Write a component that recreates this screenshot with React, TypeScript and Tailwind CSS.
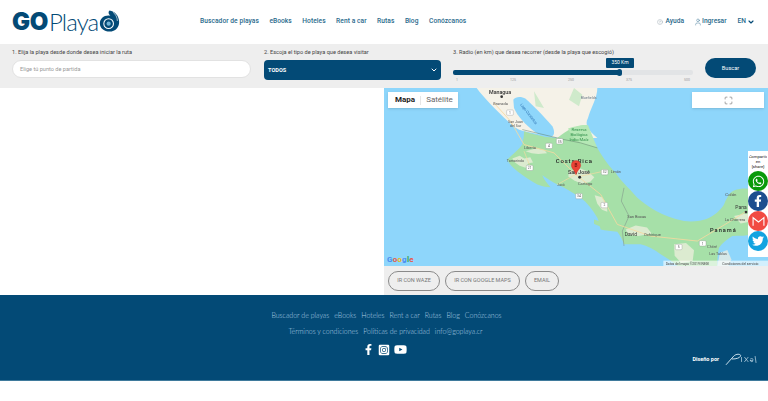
import { ChevronDown, CircleHelp, User, Maximize } from "lucide-react";
import { FaWhatsapp, FaFacebookF, FaTwitter, FaInstagramSquare, FaYoutube } from "react-icons/fa";

const nav = ["Buscador de playas", "eBooks", "Hoteles", "Rent a car", "Rutas", "Blog", "Conózcanos"];

function Logo() {
  return (
    <div className="flex items-center text-[#034a76] w-[200px] pl-3">
      <span className="text-[24px] leading-none font-black tracking-[-0.4px] font-['Inter',sans-serif]">GO</span>
      <span className="text-[24px] leading-none font-light tracking-[-0.9px] ml-[1px] font-['Lato',sans-serif]">Playa</span>
      <svg viewBox="0 0 24 26" className="w-[21px] h-[24px] -mt-[2px] ml-[1px]">
        <path d="M12 1c6 1 11 6 11 13 0 6-4 11-11 11C6 25 1 21 1 16 1 10 6 6 13 7 11 5 10 3 12 1z" fill="#034a76" />
        <circle cx="11" cy="16" r="5.5" fill="none" stroke="#fff" strokeWidth="1.2" />
        <circle cx="11" cy="16" r="2.4" fill="#6fb3d6" />
        <path d="M16 3c3 2 5 6 5 10" fill="none" stroke="#fff" strokeWidth="0.7" />
      </svg>
    </div>
  );
}

function Header() {
  return (
    <header className="h-[44px] bg-white flex items-center text-[#2a6a8c] text-[6.65px] font-medium font-['Roboto',sans-serif]">
      <Logo />
      <nav className="flex gap-[10.5px] tracking-[0.05px]">
        {nav.map((n) => (
          <span key={n}>{n}</span>
        ))}
      </nav>
      <div className="ml-auto flex items-center pr-[13px]">
        <CircleHelp size={6} strokeWidth={1.5} className="text-[#8a9aa3] mr-[2px]" />
        <span>Ayuda</span>
        <User size={8} strokeWidth={1.3} className="ml-[10px]" />
        <span>Ingresar</span>
        <span className="ml-[11px]">EN</span>
        <ChevronDown size={8} strokeWidth={3.5} className="text-[#034a76] ml-[1px]" />
      </div>
    </header>
  );
}

function Search() {
  return (
    <section className="h-[44px] bg-[#eeeeee] flex pl-3 pr-3 text-[5.6px] text-[#444] font-['Roboto',sans-serif]">
      <div className="w-[239px] mr-[13px] pt-[5px]">
        <p className="leading-[7px]">1. Elija la playa desde donde desea iniciar la ruta</p>
        <div className="mt-[4px] h-[18px] bg-white rounded-[9px] border border-[#e2e2e2] flex items-center pl-[7px] text-[#999]">
          Elige tú punto de partida
        </div>
      </div>
      <div className="w-[177px] mr-[12px] pt-[5px]">
        <p className="leading-[7px]">2. Escoja el tipo de playa que desea visitar</p>
        <div className="mt-[4px] h-[20px] bg-[#034a76] rounded-[4px] flex items-center justify-between pl-[4px] pr-[3px] text-white font-bold">
          TODOS
          <ChevronDown size={8} strokeWidth={3} />
        </div>
      </div>
      <div className="w-[240px] mr-[12px] pt-[5px]">
        <p className="leading-[7px]">3. Radio (en km) que desea recorrer (desde la playa que escogió)</p>
        <div className="relative mt-[14px] h-[5px] bg-[#e2e4e6] rounded-[2px]">
          <div className="h-full w-[167px] bg-[#034a76] rounded-[2px]" />
          <div className="absolute left-[164px] -top-[1px] w-[5px] h-[7px] rounded-full bg-[#034a76]" />
          <div className="absolute left-[153px] -top-[12px] w-[28px] h-[10px] rounded-[1px] bg-[#034a76] text-white flex items-center justify-center text-[5px]">
            350 Km
          </div>
        </div>
        <div className="flex justify-between mt-[3px] px-[3px] text-[3.5px] text-[#999] leading-[5px]">
          <span>1</span>
          <span>125</span>
          <span>250</span>
          <span>375</span>
          <span>500</span>
        </div>
      </div>
      <div className="pt-[14px]">
        <div className="w-[51px] h-[20px] rounded-full bg-[#034a76] text-white flex items-center justify-center">Buscar</div>
      </div>
    </section>
  );
}

function MapArt() {
  const road = "#f7d9a0";
  const sand = "#f3f0e2";
  return (
    <svg viewBox="0 0 1152 535" className="block w-[384px] h-[178px] blur-[0.3px]" preserveAspectRatio="none" fontFamily="Roboto, sans-serif">
      <rect width="1152" height="535" fill="#8ed6fb" />
      {/* Nicaragua */}
      <path d="M278 0 C300 30 340 70 372 100 C385 115 400 125 420 130 L520 150 L640 150 C615 130 600 110 612 90 C620 60 640 30 640 0Z" fill="#f5f2e8" />
      <path d="M570 0l25 20-10 35-30-20zM450 10l30 50-25-5z" fill="#cfeacb" />
      {/* Costa Rica and Panama */}
      <path
        d="M420 130 C450 140 490 150 520 150 C550 125 580 110 608 112 C620 140 630 165 640 180 C660 215 680 240 695 255 C710 280 730 295 760 330 C790 355 830 385 900 400 C940 405 970 395 985 385 C1000 375 1015 360 1020 350 C1030 325 1040 312 1050 308 C1075 300 1100 300 1115 310 C1130 325 1140 335 1152 340 L1152 420 C1130 430 1110 438 1100 440 C1080 446 1060 442 1045 445 C1030 455 1015 465 1005 480 C1000 500 1000 520 1000 535 L880 535 C865 520 845 510 830 500 C810 485 790 475 770 470 L720 470 C715 455 708 442 700 432 C680 430 665 428 650 425 C645 410 645 400 640 390 C625 365 610 345 590 330 C565 315 545 300 520 290 C505 282 490 272 475 262 C480 275 490 288 500 298 C485 298 472 295 460 290 C440 278 418 265 400 250 C385 238 375 228 370 215 C385 200 405 185 415 170 C418 155 420 145 420 130Z"
        fill="#a6e0a8"
      />
      <path d="M552 122 C575 115 600 110 612 112 L640 180 L590 165 C575 155 560 140 552 122Z" fill="#b5e8b5" />
      <g fill={sand} opacity="0.7">
        <path d="M385 212l22-8 14 8 18-4 8 16-14 2-8 14-18-6-14-10z" />
        <path d="M425 190l30-8 26 4 8 10-26 2-20-2z" />
        <path d="M555 250l34-8 24 10 18 16-12 14-26 6-22-10-18-12z" />
        <path d="M632 322l22 6 14 20 2 24-16-6-14-18z" />
        <path d="M725 425l30-12 34 6 14 18-40 8-30-4z" />
        <path d="M870 470l36-4 24 22-4 32-34 6-20-22z" />
        <path d="M1000 535l8-40 22-8 12 28-8 20z" />
        <path d="M1050 385l36-8 36 4-10 18-42 8z" />
      </g>
      <path d="M630 395 C650 400 668 415 680 425 C665 425 645 415 630 408Z" fill="#a6e0a8" />
      {/* Lake */}
      <path d="M388 35 C395 25 412 25 425 32 C445 50 480 85 505 115 C512 128 512 140 505 145 C490 150 470 145 450 130 C425 110 400 85 390 60Z" fill="#8ed6fb" />
      {/* Borders */}
      <path d="M415 125 L520 150 L540 155 L590 165 L640 180" fill="none" stroke="#5f7f6a" strokeWidth="1.5" />
      <path d="M720 300 L712 340 L735 385 L715 430 L720 475" fill="none" stroke="#7c8a85" strokeWidth="1.5" />
      {/* Roads */}
      <path d="M330 45 L380 100 L420 170 L510 195 L575 260 L650 320 L700 410 L800 445 L940 460 L1040 400 L1085 372" fill="none" stroke={road} strokeWidth="2.5" />
      <path d="M590 265 L660 250 M420 190 L440 240 M575 260 L520 290" fill="none" stroke={road} strokeWidth="2" />
      {/* Shields */}
      {[[378, 74, "1"], [527, 160, "35"], [495, 174, "4"], [437, 240, "21"], [662, 253, "32"], [585, 325, "34"], [661, 352, "2"], [956, 467, "1"], [884, 478, "5"]].map(([x, y, t]) => (
        <g key={String(t) + x}>
          <rect x={Number(x) - 10} y={Number(y) - 8} width="20" height="16" rx="3" fill="#fff" stroke="#888" strokeWidth="1" />
          <text x={Number(x)} y={Number(y) + 4} fontSize="10" textAnchor="middle" fill="#555">{t}</text>
        </g>
      ))}
      {/* Labels */}
      <g fill="#555" fontSize="13">
        <text x="315" y="18" fontSize="16" fill="#333" fontWeight="500">Managua</text>
        <circle cx="353" cy="26" r="4" fill="#333" />
        <text x="327" y="50" fontSize="12">Granada</text>
        <text x="590" y="32" fontSize="11" fill="#6a7a88">Bluefields</text>
        <text x="372" y="104" fontSize="11">San Juan</text>
        <text x="378" y="116" fontSize="11">del Sur</text>
        <text x="420" y="184" fontSize="12">Liberia</text>
        <text x="368" y="223" fontSize="11">Tamarindo</text>
        <text x="680" y="256" fontSize="11">Limón</text>
        <text x="520" y="296" fontSize="10">Jacó</text>
        <text x="582" y="292" fontSize="12">Cartago</text>
        <text x="730" y="392" fontSize="12">San Bocas</text>
        <text x="722" y="445" fontSize="15" fill="#333">David</text>
        <text x="780" y="444" fontSize="12">Ochirique</text>
        <text x="1024" y="324" fontSize="13">Colón</text>
        <text x="1054" y="365" fontSize="15" fill="#333">Pana</text>
        <circle cx="1086" cy="373" r="4" fill="#333" />
        <text x="1022" y="401" fontSize="12">La Chorrera</text>
        <text x="970" y="480" fontSize="11">Chitré</text>
        <text x="976" y="502" fontSize="11">Las Tablas</text>
      </g>
      <g fill="#2a6fb0" fontSize="11">
        <text transform="translate(408 50) rotate(52)">Lago Cocibolca</text>
      </g>
      <g fill="#2f8f4a" fontSize="12.5" textAnchor="middle">
        <text x="585" y="128">Reserva</text>
        <text x="585" y="143">Biológica</text>
        <text x="585" y="158">Indio Maíz</text>
      </g>
      <g fill="#222" fontWeight="500">
        <text x="515" y="224" fontSize="18" letterSpacing="2.5">Costa Rica</text>
        <text x="978" y="432" fontSize="17" letterSpacing="3">Panamá</text>
        <text x="552" y="260" fontSize="16" fill="#333">San José</text>
      </g>
      <circle cx="587" cy="268" r="4.5" fill="#333" />
      {/* Marker */}
      <path d="M576 218c-8 0-14 6-14 14 0 10 11 16 14 29 3-13 14-19 14-29 0-8-6-14-14-14z" fill="#ea4335" stroke="#c5221f" />
      <text x="576" y="238" fontSize="14" fill="#7d1a12" textAnchor="middle" fontWeight="700">B</text>
      {/* Terms strip */}
      <rect x="838" y="519" width="314" height="16" fill="#fff" opacity="0.6" />
      <text x="845" y="531" fontSize="10" fill="#444">Datos del mapa ©2019 INEGI</text>
      <text x="1015" y="531" fontSize="10" fill="#444">Condiciones del servicio</text>
    </svg>
  );
}

function Share() {
  const items = [
    { c: "bg-[#0a9a0a]", i: <FaWhatsapp size={13} /> },
    { c: "bg-[#1d4e8f]", i: <FaFacebookF size={12} /> },
    { c: "bg-[#f14a42]", i: <svg viewBox="0 0 24 24" className="w-[13px] h-[13px]" fill="none" stroke="#fff" strokeWidth="2"><path d="M2 20V5l10 8 10-8v15" /></svg> },
    { c: "bg-[#12a3e0]", i: <FaTwitter size={12} /> },
  ];
  return (
    <div className="absolute right-0 top-[63px] w-[20px] h-[106px] bg-white font-['Roboto',sans-serif]">
      <div className="h-[20px] rounded-full bg-white text-[4.2px] leading-[5px] text-[#222] text-center flex items-center justify-center whitespace-nowrap overflow-hidden">
        <span>Compartir<br />en<br />[share]</span>
      </div>
      {items.map((it, k) => (
        <div key={k} className={`h-[20px] w-[20px] rounded-full text-white flex items-center justify-center ${it.c}`}>
          {it.i}
        </div>
      ))}
    </div>
  );
}

function MapPanel() {
  return (
    <div className="w-[384px]">
      <div className="relative h-[178px] overflow-hidden">
        <MapArt />
        <div className="absolute left-[4px] top-[4px] h-[16px] w-[70px] bg-white flex items-center text-[8px] font-['Roboto',sans-serif] shadow-sm">
          <span className="w-[32px] text-center font-bold text-[#222] pl-[2px]">Mapa</span>
          <span className="w-px h-[9px] bg-[#e6e6e6]" />
          <span className="flex-1 text-center text-[#666]">Satélite</span>
        </div>
        <div className="absolute right-[4px] top-[4px] h-[16px] w-[72px] bg-white flex items-center justify-center shadow-sm">
          <Maximize size={9} strokeWidth={1.6} className="text-[#666]" />
        </div>
        <div className="absolute left-[3px] bottom-[2px] text-[8px] font-bold leading-none font-['Roboto',sans-serif] tracking-[0.2px]">
          <span className="text-[#4a8cf0]">G</span><span className="text-[#e8584c]">o</span><span className="text-[#f2b90f]">o</span><span className="text-[#4a8cf0]">g</span><span className="text-[#3aa757]">l</span><span className="text-[#e8584c]">e</span>
        </div>
        <Share />
      </div>
      <div className="h-[29px] bg-[#eeeeee] flex items-center gap-[5px] pl-[4px] text-[5.5px] text-[#777] font-['Roboto',sans-serif]">
        <span className="h-[20px] w-[52px] rounded-full border border-[#8a8a8a] flex items-center justify-center">IR CON WAZE</span>
        <span className="h-[20px] w-[75px] rounded-full border border-[#8a8a8a] flex items-center justify-center">IR CON GOOGLE MAPS</span>
        <span className="h-[20px] w-[34px] rounded-full border border-[#8a8a8a] flex items-center justify-center">EMAIL</span>
      </div>
    </div>
  );
}

function Footer() {
  return (
    <footer className="relative h-[86px] bg-[#034a76] border-b border-[#3f7a9c] text-[#b0d0e4] text-[7px] font-light font-['Lato',sans-serif] text-center">
      <div className="flex justify-center gap-[5px] pt-[16px] pl-[5px] leading-[9px]">
        {nav.map((n) => (
          <span key={n}>{n}</span>
        ))}
      </div>
      <div className="flex justify-center gap-[5px] pt-[7px] pl-[3px] leading-[9px]">
        <span>Términos y condiciones</span>
        <span>Políticas de privacidad</span>
        <span>info@goplaya.cr</span>
      </div>
      <div className="flex justify-center items-center gap-[4px] pt-[7px] pl-[2px] text-white">
        <FaFacebookF size={11} />
        <FaInstagramSquare size={12} />
        <FaYoutube size={13} />
      </div>
      <div className="absolute right-[10px] top-[57px] flex items-center text-white">
        <span className="text-[5.5px] font-bold mr-[6px] font-['Roboto',sans-serif]">Diseño por</span>
        <svg viewBox="0 0 34 14" className="w-[33px] h-[14px]" fill="none" stroke="#cfe3ee" strokeWidth="0.7">
          <path d="M1 13L9 4c3-3 8-2 7 0-1 2-4 3-9 3" strokeWidth="1" />
          <path d="M17 5v5M20 5l4 5M24 5l-4 5M26 7c2-1 3 0 3 1s-3 1-3 0M26 8c0 2 2 2 3 1M31 4l1 7" />
        </svg>
      </div>
    </footer>
  );
}

export default function App() {
  return (
    <div className="w-[768px] h-[401px] bg-white overflow-hidden">
      <Header />
      <Search />
      <main className="flex">
        <div className="w-[384px] bg-white" />
        <MapPanel />
      </main>
      <Footer />
    </div>
  );
}
